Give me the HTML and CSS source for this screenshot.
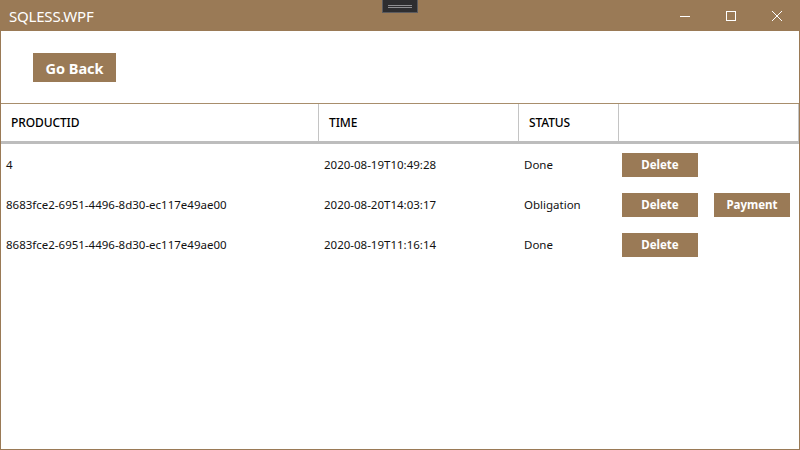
FILE: index.html
```html
<!DOCTYPE html>
<html>
<head>
<meta charset="utf-8">
<link rel="stylesheet" href="styles.css">
</head>
<body>
<div class="window">
  <div class="titlebar">
    <span class="title">SQLESS.WPF</span>
    <div class="drag"><span></span><span></span></div>
    <div class="controls">
      <div class="ctl"><svg width="10" height="10" viewBox="0 0 10 10"><path d="M0 5.5H10" stroke="#fff" stroke-width="1"/></svg></div>
      <div class="ctl"><svg width="10" height="10" viewBox="0 0 10 10"><rect x="0.5" y="0.5" width="9" height="9" fill="none" stroke="#fff" stroke-width="1"/></svg></div>
      <div class="ctl"><svg width="10" height="10" viewBox="0 0 10 10"><path d="M0 0L10 10M10 0L0 10" stroke="#fff" stroke-width="1"/></svg></div>
    </div>
  </div>
  <div class="content">
    <div class="toolbar">
      <button class="btn btn-large">Go Back</button>
    </div>
    <div class="grid">
      <div class="head">
        <div class="hcell c1">PRODUCTID</div>
        <div class="hcell c2">TIME</div>
        <div class="hcell c3">STATUS</div>
        <div class="hcell c4"></div>
      </div>
      <div class="row">
        <div class="cell c1">4</div>
        <div class="cell c2">2020-08-19T10:49:28</div>
        <div class="cell c3">Done</div>
        <div class="cell c4 actions"><button class="btn btn-small">Delete</button></div>
      </div>
      <div class="row">
        <div class="cell c1">8683fce2-6951-4496-8d30-ec117e49ae00</div>
        <div class="cell c2">2020-08-20T14:03:17</div>
        <div class="cell c3">Obligation</div>
        <div class="cell c4 actions"><button class="btn btn-small">Delete</button><button class="btn btn-small">Payment</button></div>
      </div>
      <div class="row">
        <div class="cell c1">8683fce2-6951-4496-8d30-ec117e49ae00</div>
        <div class="cell c2">2020-08-19T11:16:14</div>
        <div class="cell c3">Done</div>
        <div class="cell c4 actions"><button class="btn btn-small">Delete</button></div>
      </div>
    </div>
  </div>
</div>
</body>
</html>
```
FILE: styles.css
```css
* { box-sizing: border-box; }
html, body { margin: 0; padding: 0; }
body {
  width: 800px;
  height: 450px;
  overflow: hidden;
  font-family: "Noto Sans", "Open Sans", sans-serif;
  background: #fff;
}
.window {
  width: 800px;
  height: 450px;
  display: flex;
  flex-direction: column;
}
.titlebar {
  position: relative;
  height: 31px;
  flex: none;
  background: #9a7a56;
  display: flex;
  align-items: center;
  padding-left: 9px;
}
.title {
  color: #fff;
  font-size: 15px;
  letter-spacing: -0.2px;
  flex: 1;
}
.drag {
  position: absolute;
  left: 382px;
  top: 0;
  width: 36px;
  height: 13px;
  background: #2d2d30;
  border: 1px solid #5a5a5e;
  border-top: none;
  display: flex;
  flex-direction: column;
  align-items: center;
  justify-content: center;
  gap: 1px;
}
.drag span {
  display: block;
  width: 24px;
  height: 1px;
  background: #8e8e92;
}
.controls {
  display: flex;
  height: 100%;
}
.ctl {
  width: 46px;
  height: 100%;
  display: flex;
  align-items: center;
  justify-content: center;
}
.ctl svg { display: block; }
.content {
  flex: 1;
  border: 1px solid #9a7a56;
  border-top: none;
  display: flex;
  flex-direction: column;
}
.toolbar {
  height: 73px;
  padding: 22px 0 0 32px;
  border-bottom: 1px solid #a88e6c;
}
.btn {
  background: #9a7a56;
  color: #fff;
  border: none;
  font-family: "Noto Sans", "Open Sans", sans-serif;
  font-weight: bold;
  padding: 0;
  cursor: pointer;
}
.btn-large {
  width: 83px;
  height: 29px;
  font-size: 14.5px;
}
.btn-small {
  width: 76px;
  height: 24px;
  font-size: 11.5px;
}
.head, .row {
  display: grid;
  grid-template-columns: 318px 200px 100px 180px;
}
.head {
  height: 40px;
  border-bottom: 3px solid #bdbdbd;
}
.hcell {
  border-right: 1px solid #c4c4c4;
  padding-left: 10px;
  display: flex;
  align-items: center;
  font-size: 12px;
  font-weight: 500;
  color: #000;
  letter-spacing: -0.1px;
}
.row {
  height: 40px;
  padding-top: 1px;
}
.cell {
  display: flex;
  align-items: center;
  padding-left: 5px;
  font-size: 11.5px;
  color: #111;
  letter-spacing: 0;
}
.actions {
  padding-left: 3px;
  gap: 16px;
}
```
